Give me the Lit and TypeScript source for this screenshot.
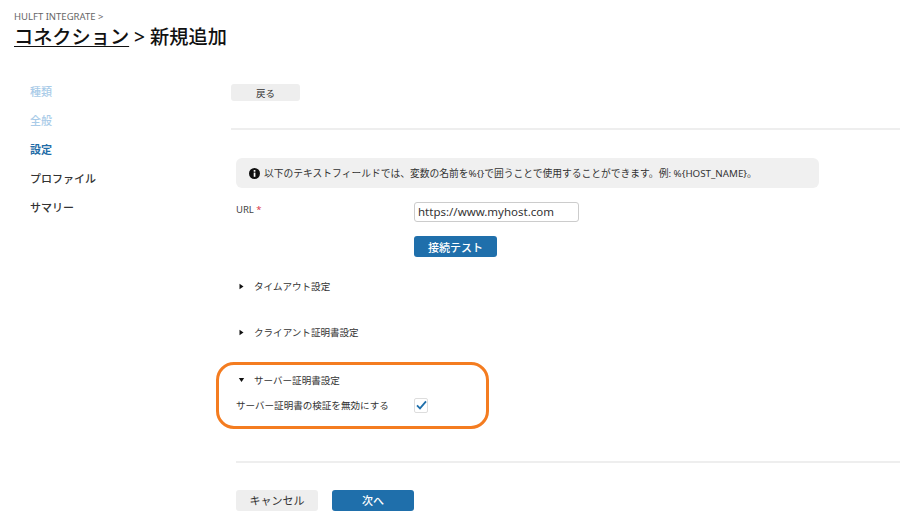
import { LitElement, html, css } from "lit";
import { customElement } from "lit/decorators.js";

@customElement("app-root")
export class AppRoot extends LitElement {
  static styles = css`
    :host {
      display: block;
      width: 900px;
      height: 517px;
      overflow: hidden;
      background: #fff;
      color: #333;
      font-family: "Noto Sans", "Noto Sans CJK JP", sans-serif;
      font-size: 10px;
    }
    .crumb { padding: 11px 0 0 14px; height: 12px; line-height: 12px; font-size: 9.5px; color: #666; }
    .title { margin: 2px 0 0 14px; height: 25px; line-height: 24px; font-size: 19.2px; font-weight: 500; color: #111; }
    .title u { text-underline-offset: 2px; }
    .page { display: grid; grid-template-columns: 231px 669px; margin-top: 30px; }
    .nav { display: flex; flex-direction: column; gap: 9px; padding: 2px 0 0 30px; font-size: 11px; font-weight: 500; }
    .nav div { height: 20px; line-height: 20px; }
    .done { color: #a9cbe8; }
    .cur { color: #1f6da8; font-weight: 700; }
    .btn { display: flex; align-items: center; justify-content: center; box-sizing: border-box; border-radius: 3px; font-family: inherit; }
    .grey { background: #eee; color: #333; }
    .blue { background: #1f6fab; color: #fff; font-weight: 500; }
    .back { width: 69px; height: 17px; font-size: 9.5px; margin-top: 4px; }
    .rule { height: 2px; background: #eeeeee; }
    .r1 { margin-top: 27px; }
    .body { padding-left: 5px; }
    .info { display: flex; align-items: center; gap: 4px; box-sizing: border-box; width: 583px; height: 30px; margin-top: 28px; padding-left: 13px; background: #f0f0f0; border-radius: 6px; font-size: 9.78px; color: #333; white-space: nowrap; }
    .info svg { flex: none; }
    .url { display: grid; grid-template-columns: 178px 165px; margin-top: 14px; }
    .lab { font-size: 9.5px; color: #444; line-height: 12px; padding-top: 2px; }
    .lab span { color: #d9364a; }
    .input { box-sizing: border-box; width: 165px; height: 20px; line-height: 18px; border: 1px solid #ccc; border-radius: 3px; padding-left: 3px; font-size: 11.5px; color: #333; }
    .test { width: 83px; height: 21px; margin: 14px 0 0 178px; font-size: 11px; }
    .row { display: flex; align-items: center; height: 14px; font-size: 9.55px; color: #333; }
    .row svg { margin-right: 9px; flex: none; margin-left: 2px; }
    .r-time { margin-top: 22px; }
    .r-client { margin-top: 32px; }
    .box { box-sizing: border-box; width: 273px; height: 67px; margin: 23px 0 0 -20px; padding: 8px 0 0 17px; border: 3px solid #f47c20; border-radius: 18px; }
    .chk { display: flex; align-items: center; margin-top: 11px; font-size: 9.55px; color: #333; height: 14px; }
    .chk .t { width: 178px; white-space: nowrap; }
    .mark { box-sizing: border-box; width: 14px; height: 15px; border: 1px solid #ddd; border-radius: 2px; display: flex; align-items: center; justify-content: center; }
    .r2 { margin-top: 32px; }
    .foot { display: flex; gap: 14px; margin-top: 27px; }
    .foot .btn { width: 82px; height: 21px; padding-bottom: 1px; font-size: 11px; }
  `;

  private tri(open: boolean) {
    return open
      ? html`<svg width="7" height="6" viewBox="0 0 7 6"><path d="M.8 1h5.4L3.5 5z" fill="#111" /></svg>`
      : html`<svg width="7" height="7" viewBox="0 0 7 7"><path d="M1.5.8v5.4l4-2.7z" fill="#111" /></svg>`;
  }

  render() {
    return html`
      <div class="crumb">HULFT INTEGRATE &gt;</div>
      <div class="title"><u>コネクション</u> &gt; 新規追加</div>
      <div class="page">
        <div class="nav">
          <div class="done">種類</div>
          <div class="done">全般</div>
          <div class="cur">設定</div>
          <div>プロファイル</div>
          <div>サマリー</div>
        </div>
        <div>
          <div class="btn grey back">戻る</div>
          <div class="rule r1"></div>
          <div class="body">
            <div class="info">
              <svg width="11" height="11" viewBox="0 0 11 11">
                <circle cx="5.5" cy="5.5" r="5.5" fill="#111" />
                <rect x="4.7" y="2" width="1.7" height="1.7" fill="#fff" />
                <rect x="4.7" y="4.6" width="1.7" height="4.2" fill="#fff" />
              </svg>
              <span>以下のテキストフィールドでは、変数の名前を%{}で囲うことで使用することができます。例: %{HOST_NAME}。</span>
            </div>
            <div class="url">
              <div class="lab">URL <span>*</span></div>
              <div class="input">https://www.myhost.com</div>
            </div>
            <div class="btn blue test">接続テスト</div>
            <div class="row r-time">${this.tri(false)}タイムアウト設定</div>
            <div class="row r-client">${this.tri(false)}クライアント証明書設定</div>
            <div class="box">
              <div class="row">${this.tri(true)}サーバー証明書設定</div>
              <div class="chk">
                <span class="t">サーバー証明書の検証を無効にする</span>
                <span class="mark">
                  <svg width="11" height="10" viewBox="0 0 11 10"><path d="M1 5.4 4 8.4 10 1.4" fill="none" stroke="#1f6fab" stroke-width="1.8" /></svg>
                </span>
              </div>
            </div>
            <div class="rule r2"></div>
            <div class="foot">
              <div class="btn grey">キャンセル</div>
              <div class="btn blue">次へ</div>
            </div>
          </div>
        </div>
      </div>
    `;
  }
}
